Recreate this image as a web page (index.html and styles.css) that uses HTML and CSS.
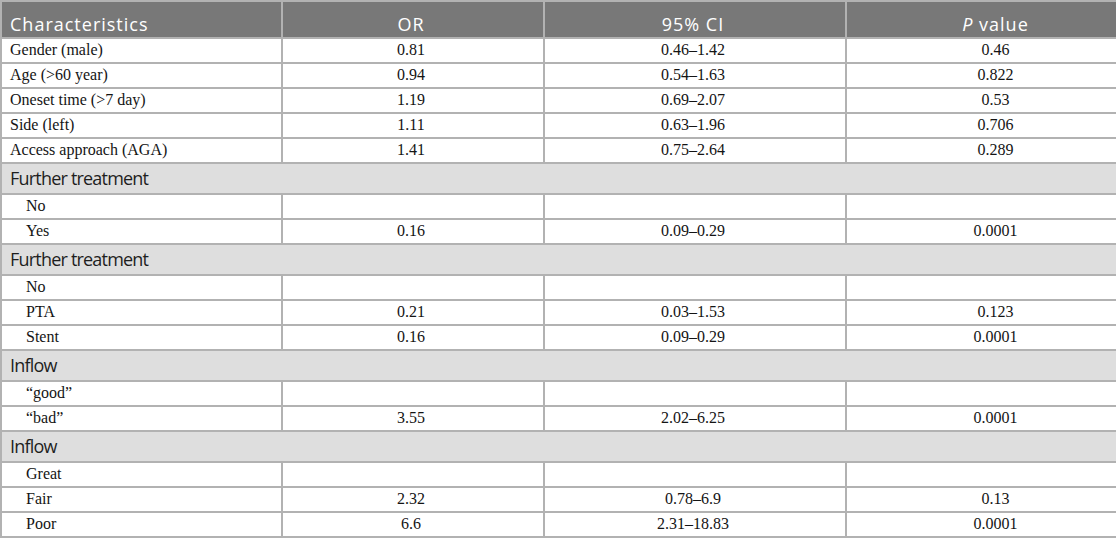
FILE: index.html
```html
<!DOCTYPE html>
<html lang="en">
<head>
<meta charset="utf-8">
<title>Regression table</title>
<link rel="stylesheet" href="styles.css">
</head>
<body>
<table class="results">
  <colgroup>
    <col class="c1"><col class="c2"><col class="c3"><col class="c4">
  </colgroup>
  <thead>
    <tr class="head">
      <th class="lbl">Characteristics</th>
      <th>OR</th>
      <th>95% CI</th>
      <th class="pv"><i>P</i> value</th>
    </tr>
  </thead>
  <tbody>
    <tr><td class="lbl">Gender (male)</td><td>0.81</td><td>0.46–1.42</td><td class="pv">0.46</td></tr>
    <tr><td class="lbl">Age (&gt;60 year)</td><td>0.94</td><td>0.54–1.63</td><td class="pv">0.822</td></tr>
    <tr><td class="lbl">Oneset time (&gt;7 day)</td><td>1.19</td><td>0.69–2.07</td><td class="pv">0.53</td></tr>
    <tr><td class="lbl">Side (left)</td><td>1.11</td><td>0.63–1.96</td><td class="pv">0.706</td></tr>
    <tr><td class="lbl">Access approach (AGA)</td><td>1.41</td><td>0.75–2.64</td><td class="pv">0.289</td></tr>
    <tr class="section"><td colspan="4">Further treatment</td></tr>
    <tr><td class="lbl sub">No</td><td></td><td></td><td class="pv"></td></tr>
    <tr><td class="lbl sub">Yes</td><td>0.16</td><td>0.09–0.29</td><td class="pv">0.0001</td></tr>
    <tr class="section"><td colspan="4">Further treatment</td></tr>
    <tr><td class="lbl sub">No</td><td></td><td></td><td class="pv"></td></tr>
    <tr><td class="lbl sub">PTA</td><td>0.21</td><td>0.03–1.53</td><td class="pv">0.123</td></tr>
    <tr><td class="lbl sub">Stent</td><td>0.16</td><td>0.09–0.29</td><td class="pv">0.0001</td></tr>
    <tr class="section"><td colspan="4">Inflow</td></tr>
    <tr><td class="lbl sub">“good”</td><td></td><td></td><td class="pv"></td></tr>
    <tr><td class="lbl sub">“bad”</td><td>3.55</td><td>2.02–6.25</td><td class="pv">0.0001</td></tr>
    <tr class="section"><td colspan="4">Inflow</td></tr>
    <tr><td class="lbl sub">Great</td><td></td><td></td><td class="pv"></td></tr>
    <tr><td class="lbl sub">Fair</td><td>2.32</td><td>0.78–6.9</td><td class="pv">0.13</td></tr>
    <tr><td class="lbl sub">Poor</td><td>6.6</td><td>2.31–18.83</td><td class="pv">0.0001</td></tr>
  </tbody>
</table>
</body>
</html>
```
FILE: styles.css
```css
html, body {
  margin: 0;
  padding: 0;
  background: #ffffff;
}

.results {
  width: 1116px;
  border-collapse: collapse;
  table-layout: fixed;
  font-family: "Liberation Serif", "Times New Roman", serif;
  font-size: 16px;
  color: #141414;
}

.c1 { width: 281px; }
.c2 { width: 262px; }
.c3 { width: 302px; }
.c4 { width: 271px; }

.results th,
.results td {
  border: 2px solid #b2b2b2;
  text-align: center;
  white-space: nowrap;
}

.results td {
  padding: 0 4px 2px 0;
  line-height: 21px;
}

.head th {
  background: #787878;
  color: #ffffff;
  font-family: "Open Sans", "Noto Sans", sans-serif;
  font-weight: 400;
  font-size: 18px;
  letter-spacing: 1px;
  line-height: 25px;
  padding: 10px 4px 0 0;
}

.results .lbl {
  text-align: left;
  padding-left: 8px;
}

.results .sub {
  padding-left: 24px;
}

.results .pv {
  padding-left: 28px;
  padding-right: 0;
}

.section td {
  background: #dedede;
  text-align: left;
  font-family: "Open Sans", "Noto Sans", sans-serif;
  font-size: 18px;
  letter-spacing: -0.8px;
  line-height: 29px;
  padding: 0 0 0 8px;
  color: #1e1e1e;
}
```
